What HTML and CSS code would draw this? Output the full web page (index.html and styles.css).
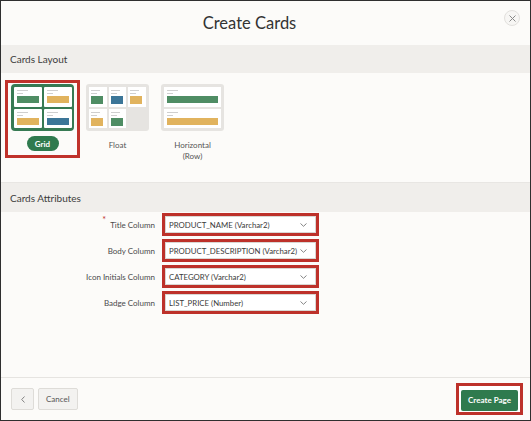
FILE: index.html
```html
<!DOCTYPE html>
<html>
<head>
<meta charset="utf-8">
<link rel="stylesheet" href="styles.css">
</head>
<body>
<div class="dialog">
  <header class="dlg-head">
    <h1 class="dlg-title">Create Cards</h1>
    <button class="close" aria-label="Close">
      <svg width="7" height="7" viewBox="0 0 7 7"><path d="M0.5 0.5 L6.5 6.5 M6.5 0.5 L0.5 6.5" stroke="#8a8a8a" stroke-width="1"/></svg>
    </button>
  </header>

  <div class="band">Cards Layout</div>
  <section class="layouts">
    <div class="opt selected">
      <div class="thumb grid-thumb">
        <div class="cell"><i class="l1"></i><i class="l2"></i><b class="bar green"></b></div>
        <div class="cell"><i class="l1"></i><i class="l2"></i><b class="bar yellow"></b></div>
        <div class="cell"><i class="l1"></i><i class="l2"></i><b class="bar yellow"></b></div>
        <div class="cell"><i class="l1"></i><i class="l2"></i><b class="bar blue"></b></div>
      </div>
      <span class="pill">Grid</span>
    </div>
    <div class="opt">
      <div class="thumb float-thumb">
        <div class="cell"><i class="l1"></i><i class="l2"></i><b class="bar green"></b></div>
        <div class="cell"><i class="l1"></i><i class="l2"></i><b class="bar blue"></b></div>
        <div class="cell"><i class="l1"></i><i class="l2"></i><b class="bar yellow"></b></div>
        <div class="cell"><i class="l1"></i><i class="l2"></i><b class="bar yellow"></b></div>
        <div class="cell"><i class="l1"></i><i class="l2"></i><b class="bar green"></b></div>
      </div>
      <span class="opt-label">Float</span>
    </div>
    <div class="opt">
      <div class="thumb row-thumb">
        <div class="cell"><i class="l1"></i><i class="l2"></i><b class="bar green"></b></div>
        <div class="cell"><i class="l1"></i><i class="l2"></i><b class="bar yellow"></b></div>
      </div>
      <span class="opt-label">Horizontal<br>(Row)</span>
    </div>
  </section>

  <div class="band band2">Cards Attributes</div>
  <section class="form">
    <div class="row">
      <label class="lbl"><span class="req">*</span>Title Column</label>
      <div class="hl"><div class="sel"><span>PRODUCT_NAME (Varchar2)</span><svg class="chev" width="7" height="4" viewBox="0 0 7 4"><path d="M0.5 0.5 L3.5 3.3 L6.5 0.5" fill="none" stroke="#777" stroke-width="0.9"/></svg></div></div>
    </div>
    <div class="row">
      <label class="lbl">Body Column</label>
      <div class="hl"><div class="sel"><span>PRODUCT_DESCRIPTION (Varchar2)</span><svg class="chev" width="7" height="4" viewBox="0 0 7 4"><path d="M0.5 0.5 L3.5 3.3 L6.5 0.5" fill="none" stroke="#777" stroke-width="0.9"/></svg></div></div>
    </div>
    <div class="row">
      <label class="lbl">Icon Initials Column</label>
      <div class="hl"><div class="sel"><span>CATEGORY (Varchar2)</span><svg class="chev" width="7" height="4" viewBox="0 0 7 4"><path d="M0.5 0.5 L3.5 3.3 L6.5 0.5" fill="none" stroke="#777" stroke-width="0.9"/></svg></div></div>
    </div>
    <div class="row">
      <label class="lbl">Badge Column</label>
      <div class="hl"><div class="sel"><span>LIST_PRICE (Number)</span><svg class="chev" width="7" height="4" viewBox="0 0 7 4"><path d="M0.5 0.5 L3.5 3.3 L6.5 0.5" fill="none" stroke="#777" stroke-width="0.9"/></svg></div></div>
    </div>
  </section>

  <footer class="foot">
    <div class="left-btns">
      <button class="btn back"><svg width="4" height="7" viewBox="0 0 4 7"><path d="M3.5 0.5 L0.7 3.5 L3.5 6.5" fill="none" stroke="#777" stroke-width="0.9"/></svg></button>
      <button class="btn">Cancel</button>
    </div>
    <div class="hl hl-btn"><button class="primary">Create Page</button></div>
  </footer>
</div>
</body>
</html>
```

FILE: styles.css
```css
* { box-sizing: border-box; }
html, body { margin: 0; padding: 0; }
body { background: #fcfbf9; font-family: Lato, "Liberation Sans", sans-serif; color: #404040; }

.dialog {
  width: 531px; height: 421px;
  border: 1px solid #2f2f2f;
  background: #fcfbf9;
  display: flex; flex-direction: column;
}

.dlg-head {
  height: 44px;
  display: flex; align-items: center; justify-content: center;
  padding-right: 32px;
  position: relative;
}
.dlg-title {
  margin: 0; font-weight: 400; font-size: 16.5px; color: #333;
  font-family: Lato, "Liberation Sans", sans-serif;
}
.close {
  position: absolute; right: 10px; top: 9px;
  width: 16px; height: 16px; border-radius: 50%;
  border: 1px solid #e2e0dd; background: #f7f6f4;
  padding: 0; display: flex; align-items: center; justify-content: center;
}

.band {
  height: 28px; background: #f0eeeb;
  display: flex; align-items: center;
  padding-left: 9px; font-size: 10px; color: #3c3c3c;
}
.band2 { height: 30px; border-top: 1px solid #e8e6e3; }

.layouts {
  display: flex; padding: 7px 0 0 4px; height: 109px;
}
.opt {
  width: 75px; display: flex; flex-direction: column; align-items: center;
  border: 3px solid transparent; padding-top: 1px;
}
.opt.selected { border-color: #c0322b; height: 78px; }

.thumb { width: 63px; height: 47px; border-radius: 3px; display: grid; }
.cell { background: #fff; display: flex; flex-direction: column; padding: 3px 3px 0; }
.cell i { display: block; height: 1px; background: #cfcfcf; margin-bottom: 2px; }
.cell .l1 { width: 11px; }
.cell .l2 { width: 6px; margin-bottom: 2px; }
.bar { display: block; height: 7px; }
.green { background: #4f8d64; }
.yellow { background: #e1b35e; }
.blue { background: #3c7698; }

.grid-thumb {
  background: #377a53; padding: 3px; gap: 2px;
  grid-template-columns: 1fr 1fr; grid-template-rows: 1fr 1fr;
  border-radius: 4px;
}
.grid-thumb .cell { border-radius: 1px; }
.grid-thumb .bar { width: 22px; }

.float-thumb {
  background: #e6e4e1; padding: 3px; gap: 2px;
  grid-template-columns: 1fr 1fr 1fr; grid-template-rows: 1fr 1fr;
}
.float-thumb .cell { padding: 3px 2px 0; }
.float-thumb .l1 { width: 9px; }
.float-thumb .bar { width: 12px; height: 8px; }

.row-thumb {
  background: #e6e4e1; padding: 3px; gap: 2px;
  grid-template-rows: 1fr 1fr;
}
.row-thumb .cell { padding: 3px 3px 0; }
.row-thumb .bar { width: 51px; height: 7px; }

.pill {
  margin-top: 5px; background: #2f7a4e; color: #fff;
  font-size: 8px; font-weight: 700;
  width: 32px; height: 15px; border-radius: 8px;
  display: flex; align-items: center; justify-content: center;
}
.opt-label {
  margin-top: 9px; font-size: 8px; color: #555; text-align: center; line-height: 11px;
}

.form { padding-top: 1px; display: flex; flex-direction: column; gap: 3px; flex: 1; }
.row { display: flex; align-items: center; }
.lbl {
  width: 161px; text-align: right; padding-right: 7px;
  font-size: 8px; color: #4a4a4a; white-space: nowrap;
}
.req { color: #c0322b; font-size: 9px; position: relative; top: -5px; margin-right: 4px; }
.hl { border: 3px solid #bd312a; padding: 0; }
.sel {
  width: 151px; height: 17px; background: #fff;
  border: 1px solid #d9d7d3;
  display: flex; align-items: center; justify-content: space-between;
  padding: 0 8px 0 3px; font-size: 7.8px; color: #3a3a3a; white-space: nowrap;
}
.chev { flex: none; }

.foot {
  height: 43px; border-top: 1px solid #e6e4e1;
  display: flex; align-items: center; justify-content: space-between;
  padding: 0 7px 0 10px;
}
.left-btns { display: flex; gap: 4px; }
.btn {
  height: 22px; background: #f3f2f0; border: 1px solid #dedcd8; border-radius: 2px;
  font-family: Lato, "Liberation Sans", sans-serif; font-size: 8px; color: #555;
  padding: 0 7px;
}
.btn.back { width: 23px; padding: 0; display: flex; align-items: center; justify-content: center; }
.hl-btn { padding: 1px 2px; background: #fff; }
.primary {
  width: 57px; height: 21px; background: #2f7a4e; color: #fff; border: none; border-radius: 2px;
  font-family: Lato, "Liberation Serif", serif; font-weight: 700; font-size: 8px;
}
```
